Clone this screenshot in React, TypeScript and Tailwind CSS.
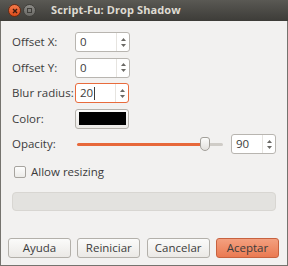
import { ReactNode } from 'react';

const font = { fontFamily: '"Open Sans", "DejaVu Sans", sans-serif' };

function SpinArrows() {
  return (
    <div className="flex w-[13px] flex-col items-center justify-center gap-[3px] border-l border-[#e6e4e0]">
      <svg width="5" height="3" viewBox="0 0 5 3">
        <path d="M0 3 L2.5 0 L5 3 Z" fill="#6a6965" />
      </svg>
      <svg width="5" height="3" viewBox="0 0 5 3">
        <path d="M0 0 L2.5 3 L5 0 Z" fill="#6a6965" />
      </svg>
    </div>
  );
}

function SpinBox({ value, focused, width }: { value: string; focused?: boolean; width: string }) {
  return (
    <div className={`flex h-[20px] ${width} rounded-[3px] border bg-white ${focused ? 'border-[#e86b3c]' : 'border-[#b8b5b0]'}`}>
      <div className="flex flex-1 items-center pl-[4px] text-[11.5px] text-[#3c3c3c]">
        {value}
        {focused && <span className="ml-px h-[13px] w-px bg-[#3c3c3c]" />}
      </div>
      <SpinArrows />
    </div>
  );
}

function Label({ children }: { children: ReactNode }) {
  return <div className="flex h-[20px] items-center whitespace-nowrap text-[11.5px] text-[#3c3c3c]">{children}</div>;
}

function Btn({ children, primary }: { children: ReactNode; primary?: boolean }) {
  return (
    <button
      className={`flex h-[20px] w-[63px] items-center justify-center rounded-[3px] border text-[11.5px] text-[#3c3c3c] ${
        primary
          ? 'border-[#c7623f] bg-gradient-to-b from-[#f3a07f] to-[#ea7a52]'
          : 'border-[#b3b0aa] bg-gradient-to-b from-[#fbfbfa] to-[#ebe9e6]'
      }`}
    >
      {children}
    </button>
  );
}

export default function App() {
  return (
    <div className="flex h-[266px] w-[288px] flex-col bg-[#f2f1f0]" style={font}>
      {/* Title bar */}
      <div className="flex h-[21px] items-center bg-gradient-to-b from-[#5a5954] to-[#3d3c38] pl-[8px]">
        <div className="flex h-[13px] w-[13px] items-center justify-center rounded-full border border-[#6b2a12] bg-gradient-to-b from-[#f47a4a] to-[#de4b17]">
          <svg width="6" height="6" viewBox="0 0 6 6">
            <path d="M1 1 L5 5 M5 1 L1 5" stroke="#3a1a10" strokeWidth="1.4" />
          </svg>
        </div>
        <div className="ml-[2px] flex h-[13px] w-[13px] items-center justify-center rounded-full border border-[#403f3b] bg-gradient-to-b from-[#8b8a86] to-[#6a6965]">
          <div className="h-[5px] w-[5px] border border-[#3e3d39]" />
        </div>
        <div className="ml-[15px] text-[11px] font-bold tracking-[0.1px] text-[#dfdbd2]">Script-Fu: Drop Shadow</div>
      </div>

      {/* Body */}
      <div className="flex flex-1 flex-col border-x border-b border-[#75736e] px-[11px] pt-[11px]">
        <div className="grid grid-cols-[63px_1fr] gap-y-[5.5px]">
          <Label>Offset X:</Label>
          <SpinBox value="0" width="w-[55px]" />
          <Label>Offset Y:</Label>
          <SpinBox value="0" width="w-[55px]" />
          <Label>Blur radius:</Label>
          <SpinBox value="20" focused width="w-[54px]" />
          <Label>Color:</Label>
          <div className="flex h-[20px] w-[54px] items-center justify-center rounded-[3px] border border-[#b3b0aa] bg-gradient-to-b from-[#fbfbfa] to-[#ebe9e6]">
            <div className="h-[13px] w-[47px] bg-black" />
          </div>
          <Label>Opacity:</Label>
          <div className="flex h-[20px] items-center">
            <div className="relative ml-[2px] flex h-[3px] w-[146px] items-center">
              <div className="h-[3px] w-[128px] rounded-l-full bg-[#e7683a]" />
              <div className="h-[3px] flex-1 rounded-r-full bg-[#cfccc7]" />
              <div className="absolute left-[123px] top-[-6px] h-[14px] w-[10px] rounded-t-[3px] rounded-b-[5px] border border-[#a3a09a] bg-gradient-to-b from-[#fbfbfa] to-[#e3e1dd]" />
            </div>
            <div className="ml-auto">
              <SpinBox value="90" width="w-[45px]" />
            </div>
          </div>
        </div>

        <div className="mt-[9px] flex items-center">
          <div className="ml-[2px] h-[12px] w-[12px] rounded-[2px] border border-[#a7a49f] bg-gradient-to-b from-[#fdfdfd] to-[#ecebe8]" />
          <span className="ml-[5px] text-[11.5px] text-[#3c3c3c]">Allow resizing</span>
        </div>

        <div className="mt-[12px] h-[19px] rounded-[4px] border border-[#d8d6d2] bg-[#e3e2df]" />

        <div className="mt-auto mb-[7px] ml-[-4px] mr-[-3px] flex justify-between">
          <Btn>Ayuda</Btn>
          <Btn>Reiniciar</Btn>
          <Btn>Cancelar</Btn>
          <Btn primary>Aceptar</Btn>
        </div>
      </div>
    </div>
  );
}
